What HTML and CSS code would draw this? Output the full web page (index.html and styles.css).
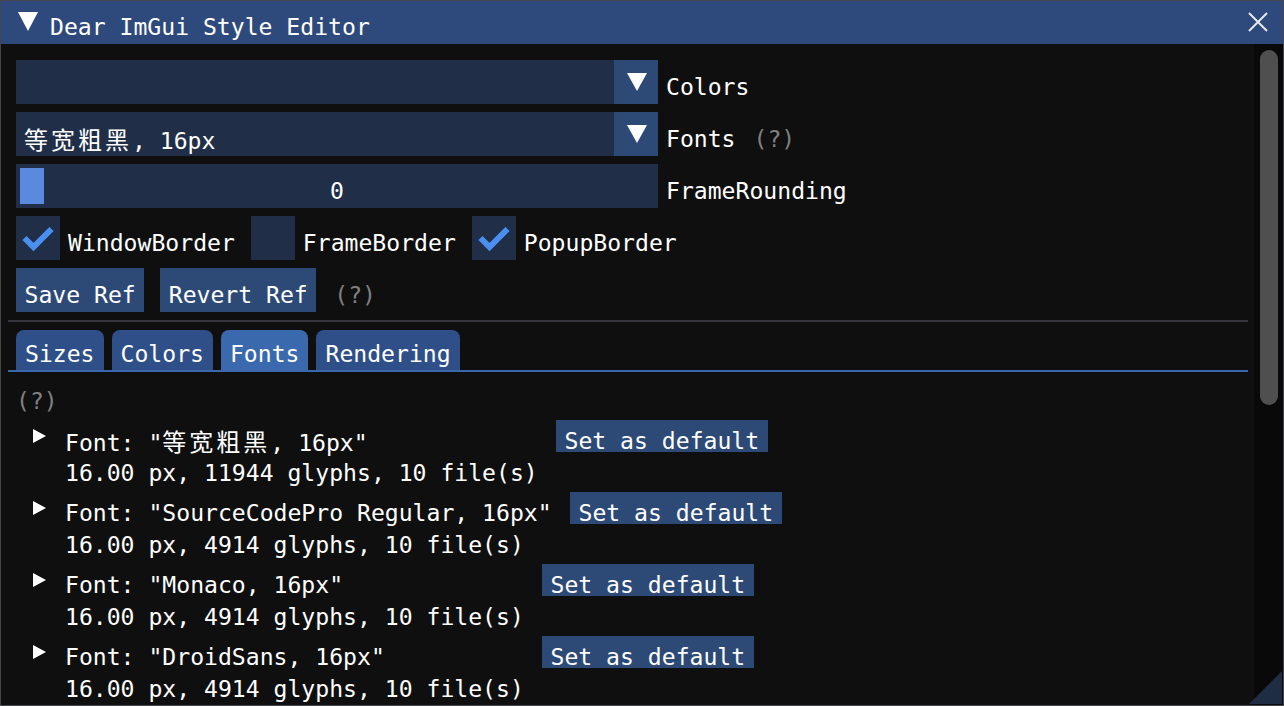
FILE: index.html
```html
<!DOCTYPE html>
<html>
<head>
<meta charset="utf-8">
<link rel="stylesheet" href="styles.css">
</head>
<body>
<div class="win">
  <div class="title">
    <svg class="collapse" width="20" height="19" viewBox="0 0 20 19"><polygon points="0,0 20,0 10,19" fill="#fff"/></svg>
    <span class="title-text">Dear ImGui Style Editor</span>
    <svg class="close" width="20" height="20" viewBox="0 0 20 20"><path d="M1 1 L19 19 M19 1 L1 19" stroke="#e8e8e8" stroke-width="2"/></svg>
  </div>
  <div class="main">
    <div class="content">
      <div class="row">
        <div class="combo">
          <div class="combo-val"></div>
          <div class="combo-btn"><svg width="44" height="44" viewBox="0 0 44 44"><polygon points="13,13 33,13 23,31" fill="#fff"/></svg></div>
        </div>
        <span class="lbl">Colors</span>
      </div>
      <div class="row">
        <div class="combo">
          <div class="combo-val"><span class="cjk">等宽粗黑</span>, 16px</div>
          <div class="combo-btn"><svg width="44" height="44" viewBox="0 0 44 44"><polygon points="13,13 33,13 23,31" fill="#fff"/></svg></div>
        </div>
        <span class="lbl">Fonts</span>
        <span class="lbl help gap">(?)</span>
      </div>
      <div class="row">
        <div class="slider">
          <div class="grab"></div>
          <div class="slider-val">0</div>
        </div>
        <span class="lbl">FrameRounding</span>
      </div>
      <div class="row wide">
        <div class="check">
          <div class="box"><svg width="44" height="44" viewBox="0 0 44 44"><polyline points="8.5,22 17.5,31 35.5,13" fill="none" stroke="#4a8ff0" stroke-width="6"/></svg></div>
          <span class="lbl">WindowBorder</span>
        </div>
        <div class="check">
          <div class="box"></div>
          <span class="lbl">FrameBorder</span>
        </div>
        <div class="check">
          <div class="box"><svg width="44" height="44" viewBox="0 0 44 44"><polyline points="8.5,22 17.5,31 35.5,13" fill="none" stroke="#4a8ff0" stroke-width="6"/></svg></div>
          <span class="lbl">PopupBorder</span>
        </div>
      </div>
      <div class="row wide">
        <div class="btn">Save Ref</div>
        <div class="btn">Revert Ref</div>
        <span class="lbl help">(?)</span>
      </div>
      <div class="sep"></div>
      <div class="tabbar">
        <div class="tab">Sizes</div>
        <div class="tab">Colors</div>
        <div class="tab active">Fonts</div>
        <div class="tab">Rendering</div>
      </div>
      <div class="line help">(?)</div>
      <div class="node">
        <div class="node-head">
          <svg class="arrow" width="49" height="32" viewBox="0 0 49 32"><polygon points="17,9 17,23 30,16" fill="#fff"/></svg>
          <span class="line name w1">Font: "<span class="cjk">等宽粗黑</span>, 16px"</span>
          <div class="sbtn">Set as default</div>
        </div>
        <div class="line sub">16.00 px, 11944 glyphs, 10 file(s)</div>
      </div>
      <div class="node">
        <div class="node-head">
          <svg class="arrow" width="49" height="32" viewBox="0 0 49 32"><polygon points="17,9 17,23 30,16" fill="#fff"/></svg>
          <span class="line name w2">Font: "SourceCodePro Regular, 16px"</span>
          <div class="sbtn">Set as default</div>
        </div>
        <div class="line sub">16.00 px, 4914 glyphs, 10 file(s)</div>
      </div>
      <div class="node">
        <div class="node-head">
          <svg class="arrow" width="49" height="32" viewBox="0 0 49 32"><polygon points="17,9 17,23 30,16" fill="#fff"/></svg>
          <span class="line name w3">Font: "Monaco, 16px"</span>
          <div class="sbtn">Set as default</div>
        </div>
        <div class="line sub">16.00 px, 4914 glyphs, 10 file(s)</div>
      </div>
      <div class="node">
        <div class="node-head">
          <svg class="arrow" width="49" height="32" viewBox="0 0 49 32"><polygon points="17,9 17,23 30,16" fill="#fff"/></svg>
          <span class="line name w3">Font: "DroidSans, 16px"</span>
          <div class="sbtn">Set as default</div>
        </div>
        <div class="line sub">16.00 px, 4914 glyphs, 10 file(s)</div>
      </div>
    </div>
    <div class="scroll"><div class="scroll-grab"></div></div>
  </div>
  <svg class="grip" width="33" height="33" viewBox="0 0 33 33"><polygon points="0,33 33,0 33,33" fill="#1e2d44"/></svg>
</div>
</body>
</html>
```

FILE: styles.css
```css
html, body {
  margin: 0;
  padding: 0;
  background: #0f0f0f;
}
body {
  font-family: "DejaVu Sans Mono", "Noto Sans CJK SC", monospace;
  font-size: 23.1px;
  color: #ffffff;
  width: 1284px;
  height: 706px;
  overflow: hidden;
}
.win {
  width: 1284px;
  height: 706px;
  box-sizing: border-box;
  border: 1px solid #45454e;
  display: flex;
  flex-direction: column;
  position: relative;
  overflow: hidden;
  background: #0f0f0f;
}
.title {
  height: 43px;
  flex: none;
  background: #2e4a7c;
  display: flex;
  align-items: flex-start;
}
.collapse {
  margin: 11px 0 0 17px;
  flex: none;
}
.title-text {
  margin-left: 12px;
  padding-top: 10px;
  line-height: 32px;
  white-space: pre;
}
.close {
  margin: 11px 15px 0 auto;
  flex: none;
}
.main {
  flex: 1;
  display: flex;
  min-height: 0;
}
.content {
  flex: 1;
  min-width: 0;
  padding: 16px 6px 0 15px;
  display: flex;
  flex-direction: column;
  gap: 8px;
  overflow: hidden;
}
.scroll {
  width: 29px;
  flex: none;
  background: #090909;
  box-sizing: border-box;
  padding: 6px 5px 0 6px;
}
.scroll-grab {
  height: 355px;
  border-radius: 9px;
  background: #4f4f4f;
}
.grip {
  position: absolute;
  right: 1px;
  bottom: 1px;
}
.row {
  display: flex;
  align-items: flex-start;
  gap: 8px;
  height: 44px;
  flex: none;
}
.row.wide {
  gap: 16px;
}
.lbl {
  padding-top: 11px;
  line-height: 32px;
  white-space: pre;
}
.help {
  color: #808080;
}
.help.gap {
  margin-left: 10px;
}
.row.wide .help {
  margin-left: 2px;
}
.combo {
  width: 642px;
  height: 44px;
  display: flex;
  background: #212e47;
  flex: none;
}
.combo-val {
  flex: 1;
  padding: 11px 8px 0;
  line-height: 32px;
  white-space: pre;
}
.combo-btn {
  width: 44px;
  height: 44px;
  background: #2d4a77;
}
.combo-btn svg {
  display: block;
}
.cjk {
  font-family: "Noto Sans CJK SC", sans-serif;
  font-size: 24px;
  letter-spacing: 3px;
}
.slider {
  width: 642px;
  height: 44px;
  background: #212e47;
  display: grid;
  flex: none;
}
.grab {
  grid-area: 1 / 1;
  justify-self: start;
  width: 24px;
  height: 36px;
  margin: 4px;
  background: #5a8ae0;
}
.slider-val {
  grid-area: 1 / 1;
  justify-self: center;
  padding-top: 11px;
  line-height: 32px;
}
.check {
  display: flex;
  gap: 8px;
}
.box {
  width: 44px;
  height: 44px;
  background: #212e47;
}
.box svg {
  display: block;
}
.btn {
  height: 44px;
  box-sizing: border-box;
  padding: 11px 8.5px 0;
  line-height: 32px;
  background: #2d4a77;
  white-space: pre;
}
.sep {
  height: 2px;
  margin-left: -8px;
  background: #35353c;
  flex: none;
}
.tabbar {
  display: flex;
  gap: 8px;
  margin-left: -8px;
  padding-left: 8px;
  border-bottom: 2px solid #3a67aa;
  flex: none;
}
.tab {
  height: 40px;
  box-sizing: border-box;
  padding: 8px 9px 0;
  line-height: 32px;
  background: #2f4f88;
  border-radius: 8px 8px 0 0;
}
.tab.active {
  background: #3a69ad;
}
.line {
  display: block;
  height: 32px;
  box-sizing: border-box;
  padding-top: 5px;
  line-height: 32px;
  white-space: pre;
  flex: none;
}
.node {
  display: flex;
  flex-direction: column;
  flex: none;
}
.node-head {
  display: flex;
  height: 32px;
}
.arrow {
  flex: none;
  display: block;
}
.name {
  flex: none;
}
.w1 { width: 491px; }
.w2 { width: 505px; }
.w3 { width: 477px; }
.sbtn {
  height: 32px;
  box-sizing: border-box;
  padding: 5px 8.5px 0;
  line-height: 32px;
  background: #2d4a77;
  white-space: pre;
  flex: none;
}
.sub {
  padding-left: 49px;
}
```
